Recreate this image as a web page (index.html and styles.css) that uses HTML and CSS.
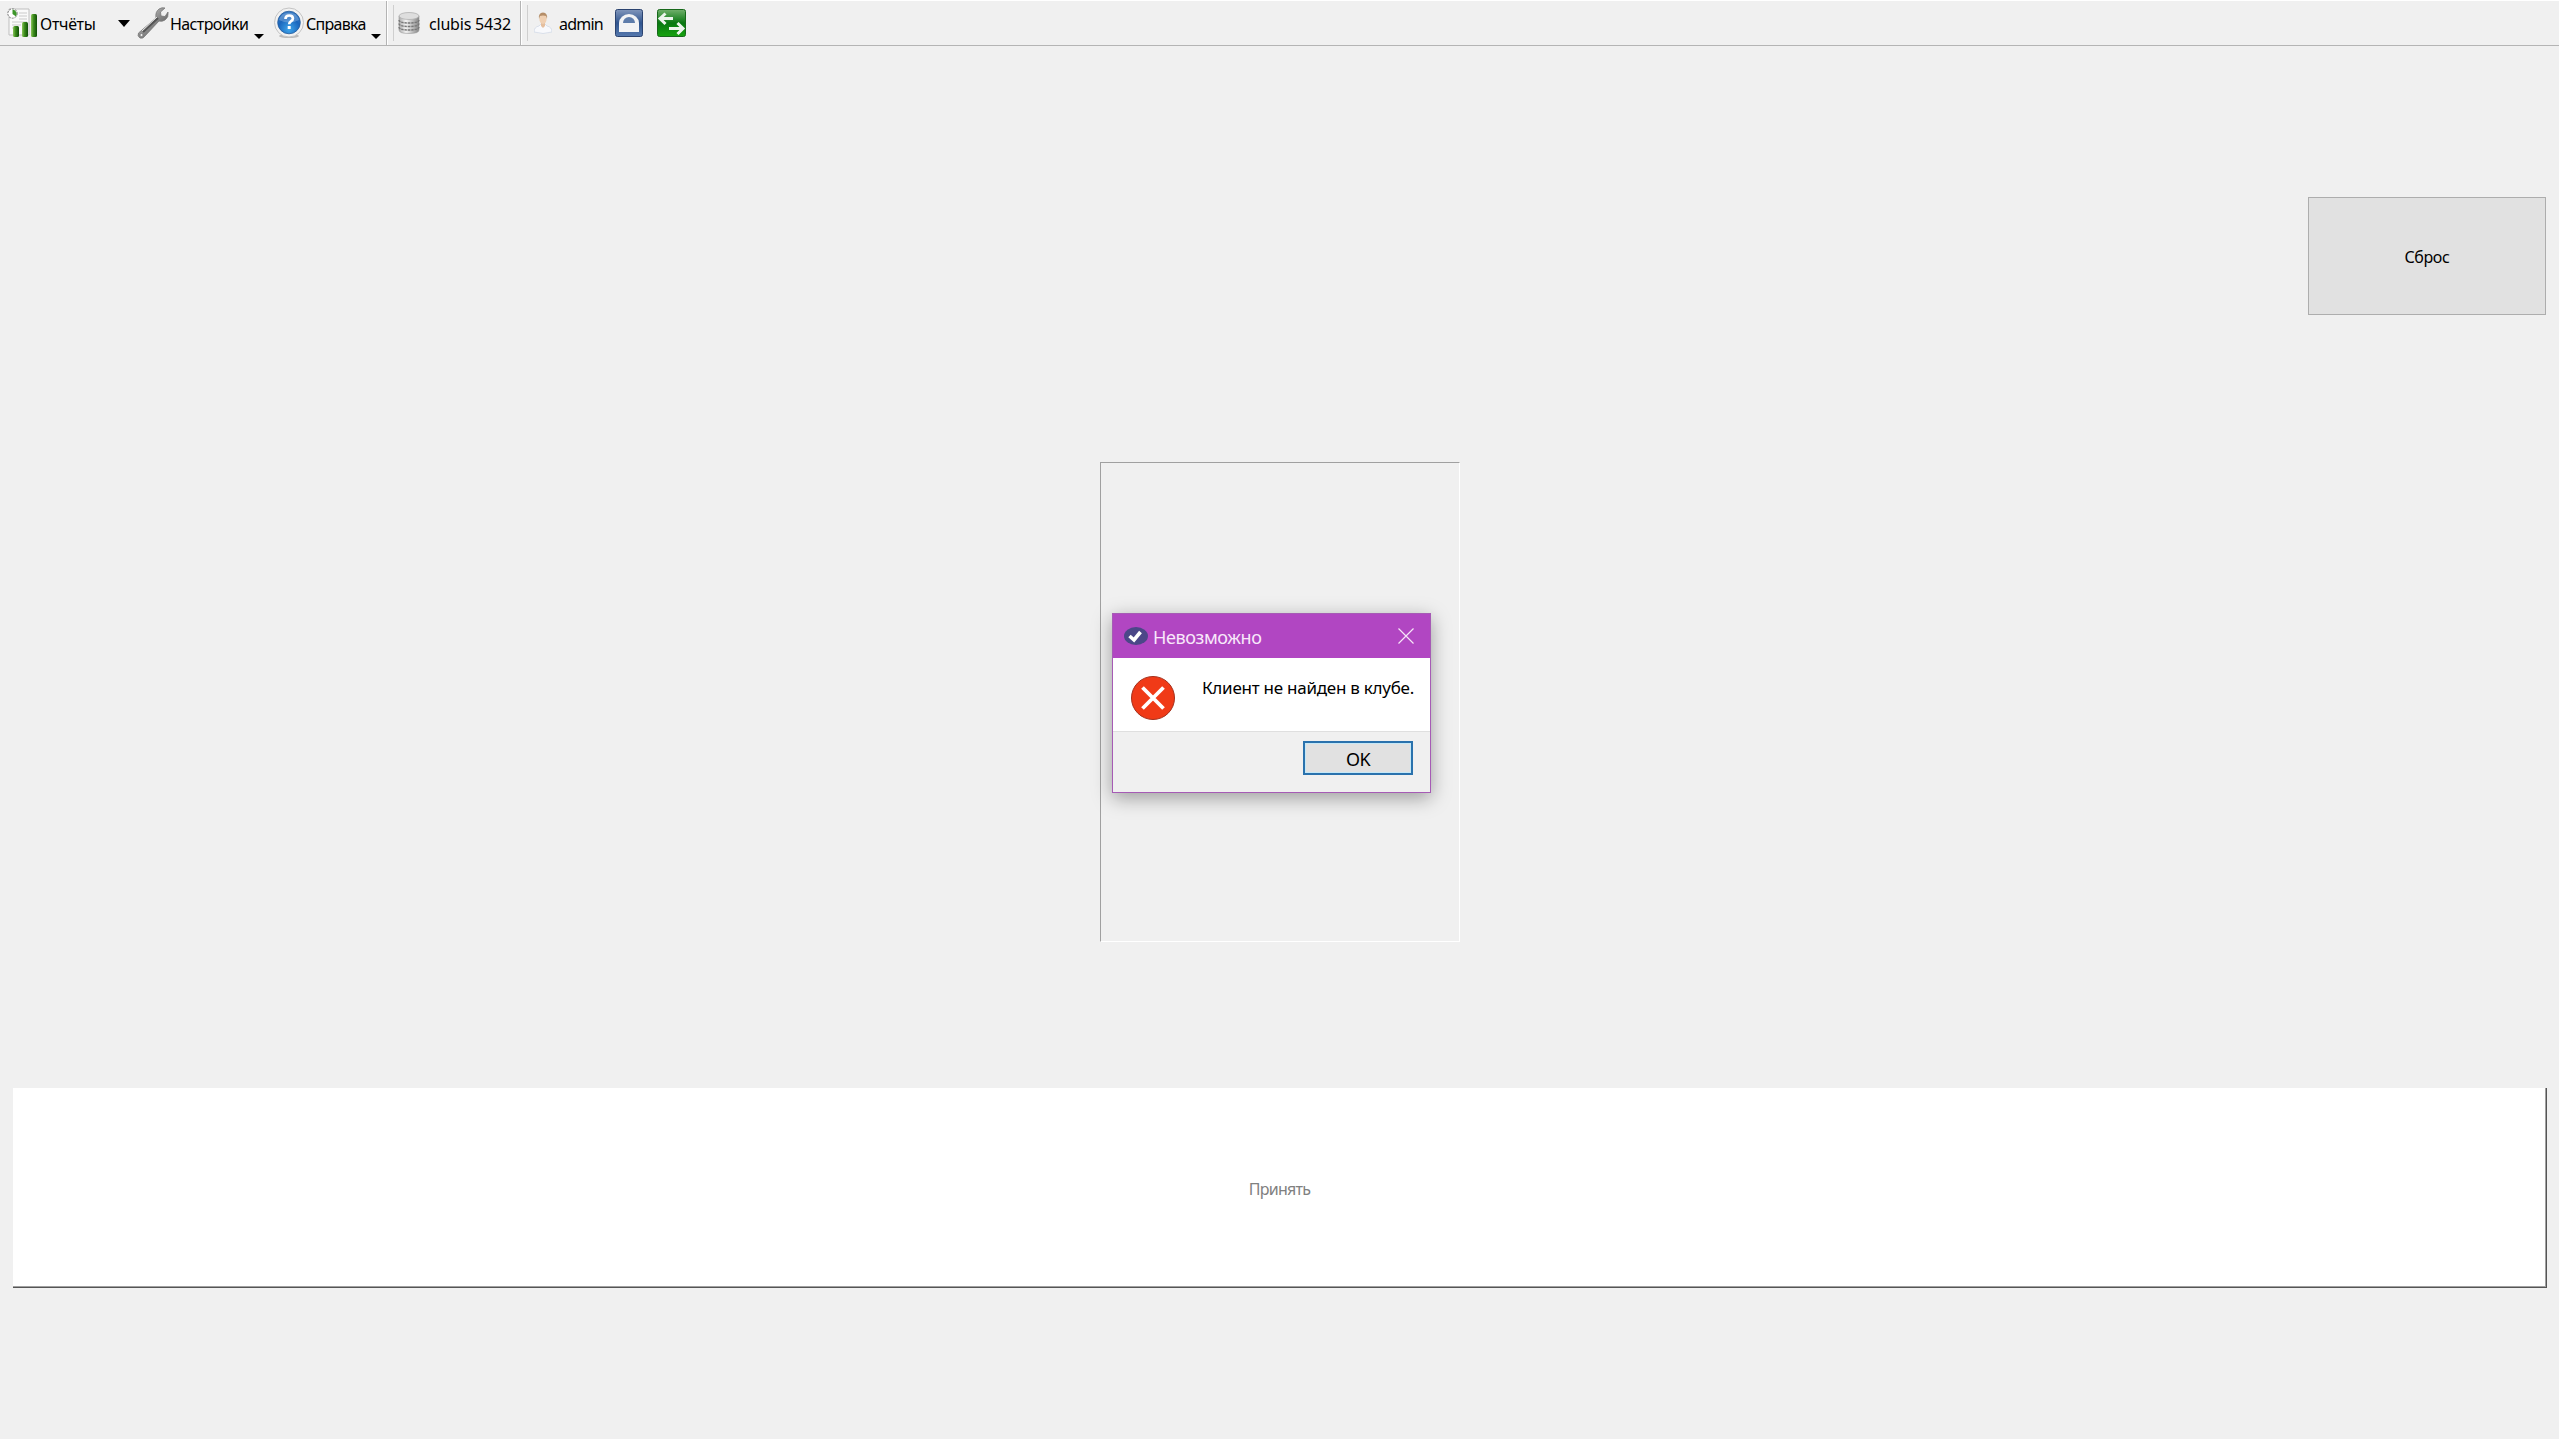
FILE: index.html
```html
<!DOCTYPE html>
<html lang="ru">
<head>
    <meta charset="utf-8">
    <title>Clubis</title>
    <link rel="stylesheet" href="styles.css">
</head>
<body>
    <header class="toolbar">
        <div class="group main-group">
            <a class="tool reports">
                <svg width="30" height="30" viewBox="0 0 30 30">
                    <defs>
                        <linearGradient id="bar" x1="0" x2="1">
                            <stop offset="0" stop-color="#8cc45c"/>
                            <stop offset=".4" stop-color="#3f8f1e"/>
                            <stop offset="1" stop-color="#0f4d06"/>
                        </linearGradient>
                    </defs>
                    <path d="M2 1h20v26H2z" fill="#fafafa" stroke="#bfbfbf"/>
                    <path d="M12 5h8M12 8h8M12 11h8M5 14h15M5 17h9M5 20h5" stroke="#cacaca"/>
                    <circle cx="5.500" cy="5.500" r="4.700" fill="#fff" stroke="#777" stroke-dasharray="2 1"/>
                    <path d="M5.500 6V1.500a4.500 4.500 0 0 1 3.500 7z" fill="#3d962a"/>
                    <rect x="6" y="18" width="6" height="11" rx="1.500" fill="url(#bar)"/>
                    <rect x="15" y="14" width="6" height="15" rx="1.500" fill="url(#bar)"/>
                    <rect x="24" y="6" width="6" height="23" rx="1.500" fill="url(#bar)"/>
                </svg>
                <span>Отчёты</span>
            </a>
            <svg class="arrow big" width="12" height="7" viewBox="0 0 12 7"><path d="M0 0h12L6 7z"/></svg>
            <a class="tool settings">
                <svg width="32" height="32" viewBox="0 0 32 32">
                    <defs>
                        <linearGradient id="steel" x1="0" x2="1" y1="0" y2="1">
                            <stop offset="0" stop-color="#e8e8e8"/>
                            <stop offset=".5" stop-color="#8a8a8a"/>
                            <stop offset="1" stop-color="#3c3c3c"/>
                        </linearGradient>
                    </defs>
                    <path d="M1.500 26L19 11q-1-6 3-9 3-2 6-1l-4.500 4 .5 4 4 .5L31 5q1 5-3 8-3 2-6 1L8 29q-2 3-5 2-3-2-1.500-5z" fill="url(#steel)" stroke="#777" stroke-width=".8"/>
                    <path d="M6 25L21 11" stroke="#555" stroke-width="2.200"/>
                    <path d="M5 24L20 10" stroke="#e4e4e4" stroke-width="1"/>
                    <circle cx="4.500" cy="28" r="1.500" fill="#eee" stroke="#666" stroke-width=".6"/>
                </svg>
                <span>Настройки</span>
            </a>
            <svg class="arrow" width="10" height="5" viewBox="0 0 10 5"><path d="M0 0h10L5 5z"/></svg>
            <a class="tool help">
                <svg width="32" height="32" viewBox="0 0 32 32">
                    <defs>
                        <radialGradient id="ball" cx=".5" cy=".8" r=".8">
                            <stop offset="0" stop-color="#3fa5ea"/>
                            <stop offset=".6" stop-color="#1a66bd"/>
                            <stop offset="1" stop-color="#3b7dc6"/>
                        </radialGradient>
                    </defs>
                    <ellipse cx="16" cy="29" rx="10" ry="2" fill="#bbb"/>
                    <circle cx="16" cy="15.500" r="14.500" fill="#f2f2f2" stroke="#c4c4c4"/>
                    <circle cx="16" cy="15.500" r="11.300" fill="url(#ball)" stroke="#235a9c" stroke-width=".8"/>
                    <path d="M6 13a10.500 10.500 0 0 1 20 0q-10 5-20 0z" fill="#fff" opacity=".22"/>
                    <path d="M12.500 12q0-3.500 3.700-3.500t3.700 3q0 1.700-2 2.800-1.700 1-1.700 3" fill="none" stroke="#fff" stroke-width="2.700"/>
                    <rect x="14.700" y="19" width="3" height="3" fill="#fff"/>
                </svg>
                <span>Справка</span>
            </a>
            <svg class="arrow" width="10" height="5" viewBox="0 0 10 5"><path d="M0 0h10L5 5z"/></svg>
        </div>
        <div class="group db-group">
            <svg width="22" height="22" viewBox="0 0 22 22">
                <defs>
                    <linearGradient id="disk" x1="0" x2="1">
                        <stop offset="0" stop-color="#aaa"/>
                        <stop offset=".35" stop-color="#f4f4f4"/>
                        <stop offset="1" stop-color="#858585"/>
                    </linearGradient>
                </defs>
                <path d="M1 4v14q0 3.500 10 3.500T21 18V4z" fill="url(#disk)" stroke="#999" stroke-width=".6"/>
                <path d="M1 8q0 3 10 3t10-3M1 11.500q0 3 10 3t10-3M1 15q0 3 10 3t10-3" fill="none" stroke="#777" stroke-width="1.400" stroke-dasharray="2.500 .8"/>
                <ellipse cx="11" cy="4" rx="10" ry="3.500" fill="#dedede" stroke="#aaa" stroke-width=".7"/>
            </svg>
            <span class="db-name">clubis 5432</span>
        </div>
        <div class="group user-group">
            <svg width="18" height="22" viewBox="0 0 18 22">
                <path d="M0 20q0-5 5-6l2-2h4l2 2q5 1 5 6-9 3-18 0z" fill="#f8f9fc" stroke="#cdd6e4" stroke-width=".7"/>
                <path d="M7 11h4v3l-2 2-2-2z" fill="#e5bf9e"/>
                <ellipse cx="9" cy="7" rx="3.600" ry="5" fill="#f0d0b2"/>
                <path d="M5 7Q4 1 9 .5 14 1 13 7l-1-3q-3-1-6 0z" fill="#b58e68"/>
            </svg>
            <span class="user-name">admin</span>
            <svg class="lock" width="28" height="28" viewBox="0 0 28 28">
                <defs>
                    <linearGradient id="navy" x2="0" y2="1">
                        <stop offset="0" stop-color="#8196bb"/>
                        <stop offset=".5" stop-color="#30558f"/>
                        <stop offset="1" stop-color="#5578ad"/>
                    </linearGradient>
                </defs>
                <rect x=".5" y=".5" width="27" height="27" rx="2" fill="url(#navy)" stroke="#2b4370"/>
                <path d="M4 23v-9a10 9 0 0 1 20 0v9z" fill="#f2f3f5"/>
                <path d="M8 14a6 6 0 0 1 12 0z" fill="#5d7cab"/>
            </svg>
            <svg class="swap" width="29" height="28" viewBox="0 0 29 28">
                <defs>
                    <linearGradient id="green" x2="0" y2="1">
                        <stop offset="0" stop-color="#72b06c"/>
                        <stop offset=".5" stop-color="#087811"/>
                        <stop offset="1" stop-color="#16a30f"/>
                    </linearGradient>
                </defs>
                <rect x=".5" y=".5" width="28" height="27" rx="2" fill="url(#green)" stroke="#17681a"/>
                <path d="M16 9.500H4M8.500 4.500L3 9.500l5.500 5.500M12 19.500h13M20.500 14l5.500 5.500-5.500 5.500" fill="none" stroke="#eef5ee" stroke-width="3"/>
            </svg>
        </div>
    </header>

    <main>
        <button class="reset">Сброс</button>
        <div class="photo"></div>
        <button class="accept" disabled>Принять</button>
    </main>

    <div class="dialog">
        <div class="dialog-title">
            <svg width="24" height="18" viewBox="0 0 24 18">
                <ellipse cx="12" cy="9" rx="12" ry="9" fill="#4b4788"/>
                <path d="M5.500 9l4.500 4L16.500 5" fill="none" stroke="#fff" stroke-width="3.600"/>
            </svg>
            <span>Невозможно</span>
            <svg class="close" width="16" height="16" viewBox="0 0 16 16">
                <path d="M.5.500l15 15M15.500.500l-15 15" stroke="#f6e6f8" stroke-width="1.200"/>
            </svg>
        </div>
        <div class="dialog-body">
            <svg width="44" height="44" viewBox="0 0 44 44">
                <circle cx="22" cy="22" r="21.500" fill="#f03a17" stroke="#a5301c"/>
                <path d="M11.500 11.500l21 21M32.500 11.500l-21 21" stroke="#fff" stroke-width="3.800"/>
            </svg>
            <span>Клиент не найден в клубе.</span>
        </div>
        <div class="dialog-footer">
            <button class="ok">OK</button>
        </div>
    </div>
</body>
</html>
```
FILE: styles.css
```css
* {
    box-sizing: border-box;
}

body {
    margin: 0;
    height: 1439px;
    overflow: hidden;
    background-color: #f0f0f0;
    color: #000;
    font-family: "Noto Sans", "Open Sans", sans-serif;
    font-size: 16px;
}

svg {
    display: block;
    flex: none;
}

span {
    white-space: nowrap;
}

button {
    padding: 0;
    font-family: inherit;
    font-size: 16px;
    color: #000;
}

.toolbar {
    display: flex;
    height: 46px;
    border-top: 1px solid #fff;
    border-bottom: 1px solid #b4b4b4;
}

.toolbar span {
    padding-top: 2px;
}

.group {
    display: flex;
    align-items: center;
    height: 44px;
}

.main-group {
    width: 387px;
    padding-left: 7px;
    border-right: 1px solid #b4b4b4;
}

.tool {
    display: flex;
    align-items: center;
}

.reports {
    width: 111px;
    gap: 3px;
    letter-spacing: -0.3px;
}

.settings {
    width: 117px;
    margin-left: 7px;
    gap: 1px;
    letter-spacing: -0.6px;
}

.help {
    width: 98px;
    margin-left: 9px;
    gap: 1px;
    letter-spacing: -0.7px;
}

.arrow {
    margin-top: 27px;
}

.arrow.big {
    margin-top: 0;
}

.db-group {
    width: 134px;
    border-left: 1px solid #fff;
    border-right: 1px solid #b4b4b4;
}

.user-group {
    border-left: 1px solid #fff;
}

.db-group::before,
.user-group::before {
    content: "";
    width: 1px;
    height: 36px;
    margin: 0 4px 0 5px;
    background-color: #cfcfcf;
}

.user-group::before {
    margin-right: 6px;
}

.db-name {
    margin-left: 9px;
    letter-spacing: -0.2px;
}

.user-name {
    width: 56px;
    margin-left: 7px;
    letter-spacing: -0.8px;
}

.swap {
    margin-left: 14px;
}

main {
    display: flex;
    flex-direction: column;
    padding: 151px 13px 0 13px;
}

.reset {
    align-self: flex-end;
    width: 238px;
    height: 118px;
    padding-top: 2px;
    background-color: #e1e1e1;
    border: 1px solid #adadad;
    letter-spacing: -0.4px;
}

.photo {
    align-self: center;
    width: 360px;
    height: 480px;
    margin-top: 147px;
    border: 1px solid #a0a0a0;
    border-right-color: #fff;
    border-bottom-color: #fff;
}

.accept {
    width: 2534px;
    height: 200px;
    margin-top: 146px;
    padding-top: 2px;
    background-color: #fff;
    border: 0 solid #555;
    border-width: 0 1px 1px 0;
    box-shadow: inset -1px -1px #a0a0a0;
    color: #808080;
    letter-spacing: -0.7px;
}

.dialog {
    position: absolute;
    left: 1112px;
    top: 613px;
    width: 319px;
    height: 180px;
    border: 1px solid #a65bb5;
    background-color: #fff;
    box-shadow: 0 5px 18px rgba(0, 0, 0, 0.35);
}

.dialog-title {
    display: flex;
    align-items: center;
    height: 44px;
    padding: 0 16px 0 11px;
    background-color: #b146c2;
    color: #f8e8fa;
    font-size: 18px;
}

.dialog-title svg {
    margin-bottom: 1px;
}

.dialog-title span {
    margin-left: 5px;
    padding-top: 1px;
    letter-spacing: -0.4px;
}

.close {
    margin-left: auto;
}

.dialog-body {
    display: flex;
    height: 73px;
    padding: 18px 0 0 18px;
}

.dialog-body span {
    margin-left: 27px;
    font-size: 17px;
    letter-spacing: -0.25px;
}

.dialog-footer {
    display: flex;
    justify-content: flex-end;
    height: 61px;
    padding: 9px 17px 0 0;
    border-top: 1px solid #dfdfdf;
    background-color: #f0f0f0;
}

.ok {
    width: 110px;
    height: 34px;
    padding-top: 1px;
    border: 2px solid #2a72ad;
    background-color: #e1e1e1;
    box-shadow: inset 0 0 0 1px #c5e8f7;
    font-size: 18px;
    letter-spacing: -0.5px;
}
```
